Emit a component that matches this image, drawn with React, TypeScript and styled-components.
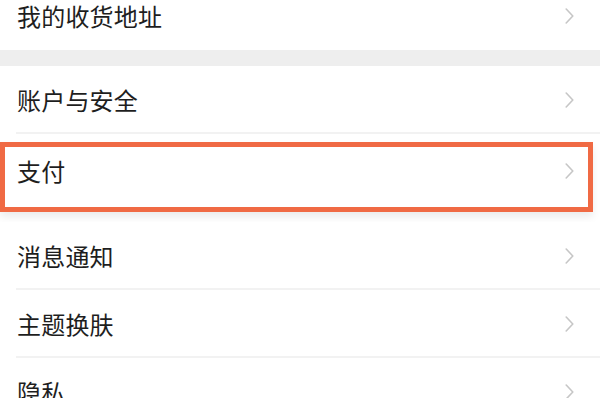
import React from 'react';
import styled, { createGlobalStyle } from 'styled-components';

const GlobalStyle = createGlobalStyle`
  html, body {
    margin: 0;
    padding: 0;
    background: #ffffff;
    overflow: hidden;
  }
  body {
    font-family: "Noto Sans CJK SC", "Noto Sans", sans-serif;
  }
`;

const Page = styled.div`
  width: 600px;
  height: 398px;
  overflow: hidden;
  background: #ffffff;
`;

const List = styled.ul`
  margin: -18px 0 0;
  padding: 0;
`;

const Row = styled.li<{ height?: number; divider?: boolean; padBottom?: number }>`
  list-style: none;
  position: relative;
  height: ${(props) => props.height || 68}px;
  padding: 0 26px ${(props) => props.padBottom || 0}px 17px;
  box-sizing: border-box;
  display: flex;
  align-items: center;
  justify-content: space-between;
  background: #ffffff;

  &::after {
    content: '';
    display: ${(props) => (props.divider ? 'block' : 'none')};
    position: absolute;
    left: 16px;
    right: 0;
    bottom: 0;
    height: 2px;
    background: #f2f2f2;
  }
`;

const Label = styled.span`
  font-size: 24px;
  line-height: 1;
  color: #1e1e1e;
  letter-spacing: 0.2px;
`;

const SectionGap = styled.li`
  list-style: none;
  height: 16px;
  background: #eeeeee;
`;

const Highlight = styled.div`
  position: absolute;
  top: 8px;
  bottom: 10px;
  left: 0;
  right: 7px;
  border: 5px solid #f06a44;
  box-shadow: 0 5px 8px rgba(0, 0, 0, 0.08);
  pointer-events: none;
`;

const Chevron = () => (
  <svg width="9" height="16" viewBox="0 0 9 16" fill="none">
    <polyline
      points="1.2,1 7.8,8 1.2,15"
      stroke="#c6c6c6"
      strokeWidth="1.6"
      strokeLinecap="round"
      strokeLinejoin="round"
    />
  </svg>
);

interface IItem {
  label: string;
  divider?: boolean;
  height?: number;
  padBottom?: number;
  highlighted?: boolean;
}

const Item: React.FC<IItem> = ({
  label, divider, height, padBottom, highlighted,
}) => (
  <Row divider={divider} height={height} padBottom={padBottom}>
    <Label>{label}</Label>
    <Chevron />
    {highlighted && <Highlight />}
  </Row>
);

const App: React.FC = () => (
  <Page>
    <GlobalStyle />
    <List>
      <Item label="我的收货地址" />
      <SectionGap />
      <Item label="账户与安全" divider />
      <Item label="支付" height={88} padBottom={14} highlighted />
      <Item label="消息通知" divider />
      <Item label="主题换肤" divider />
      <Item label="隐私" divider />
    </List>
  </Page>
);

export default App;
